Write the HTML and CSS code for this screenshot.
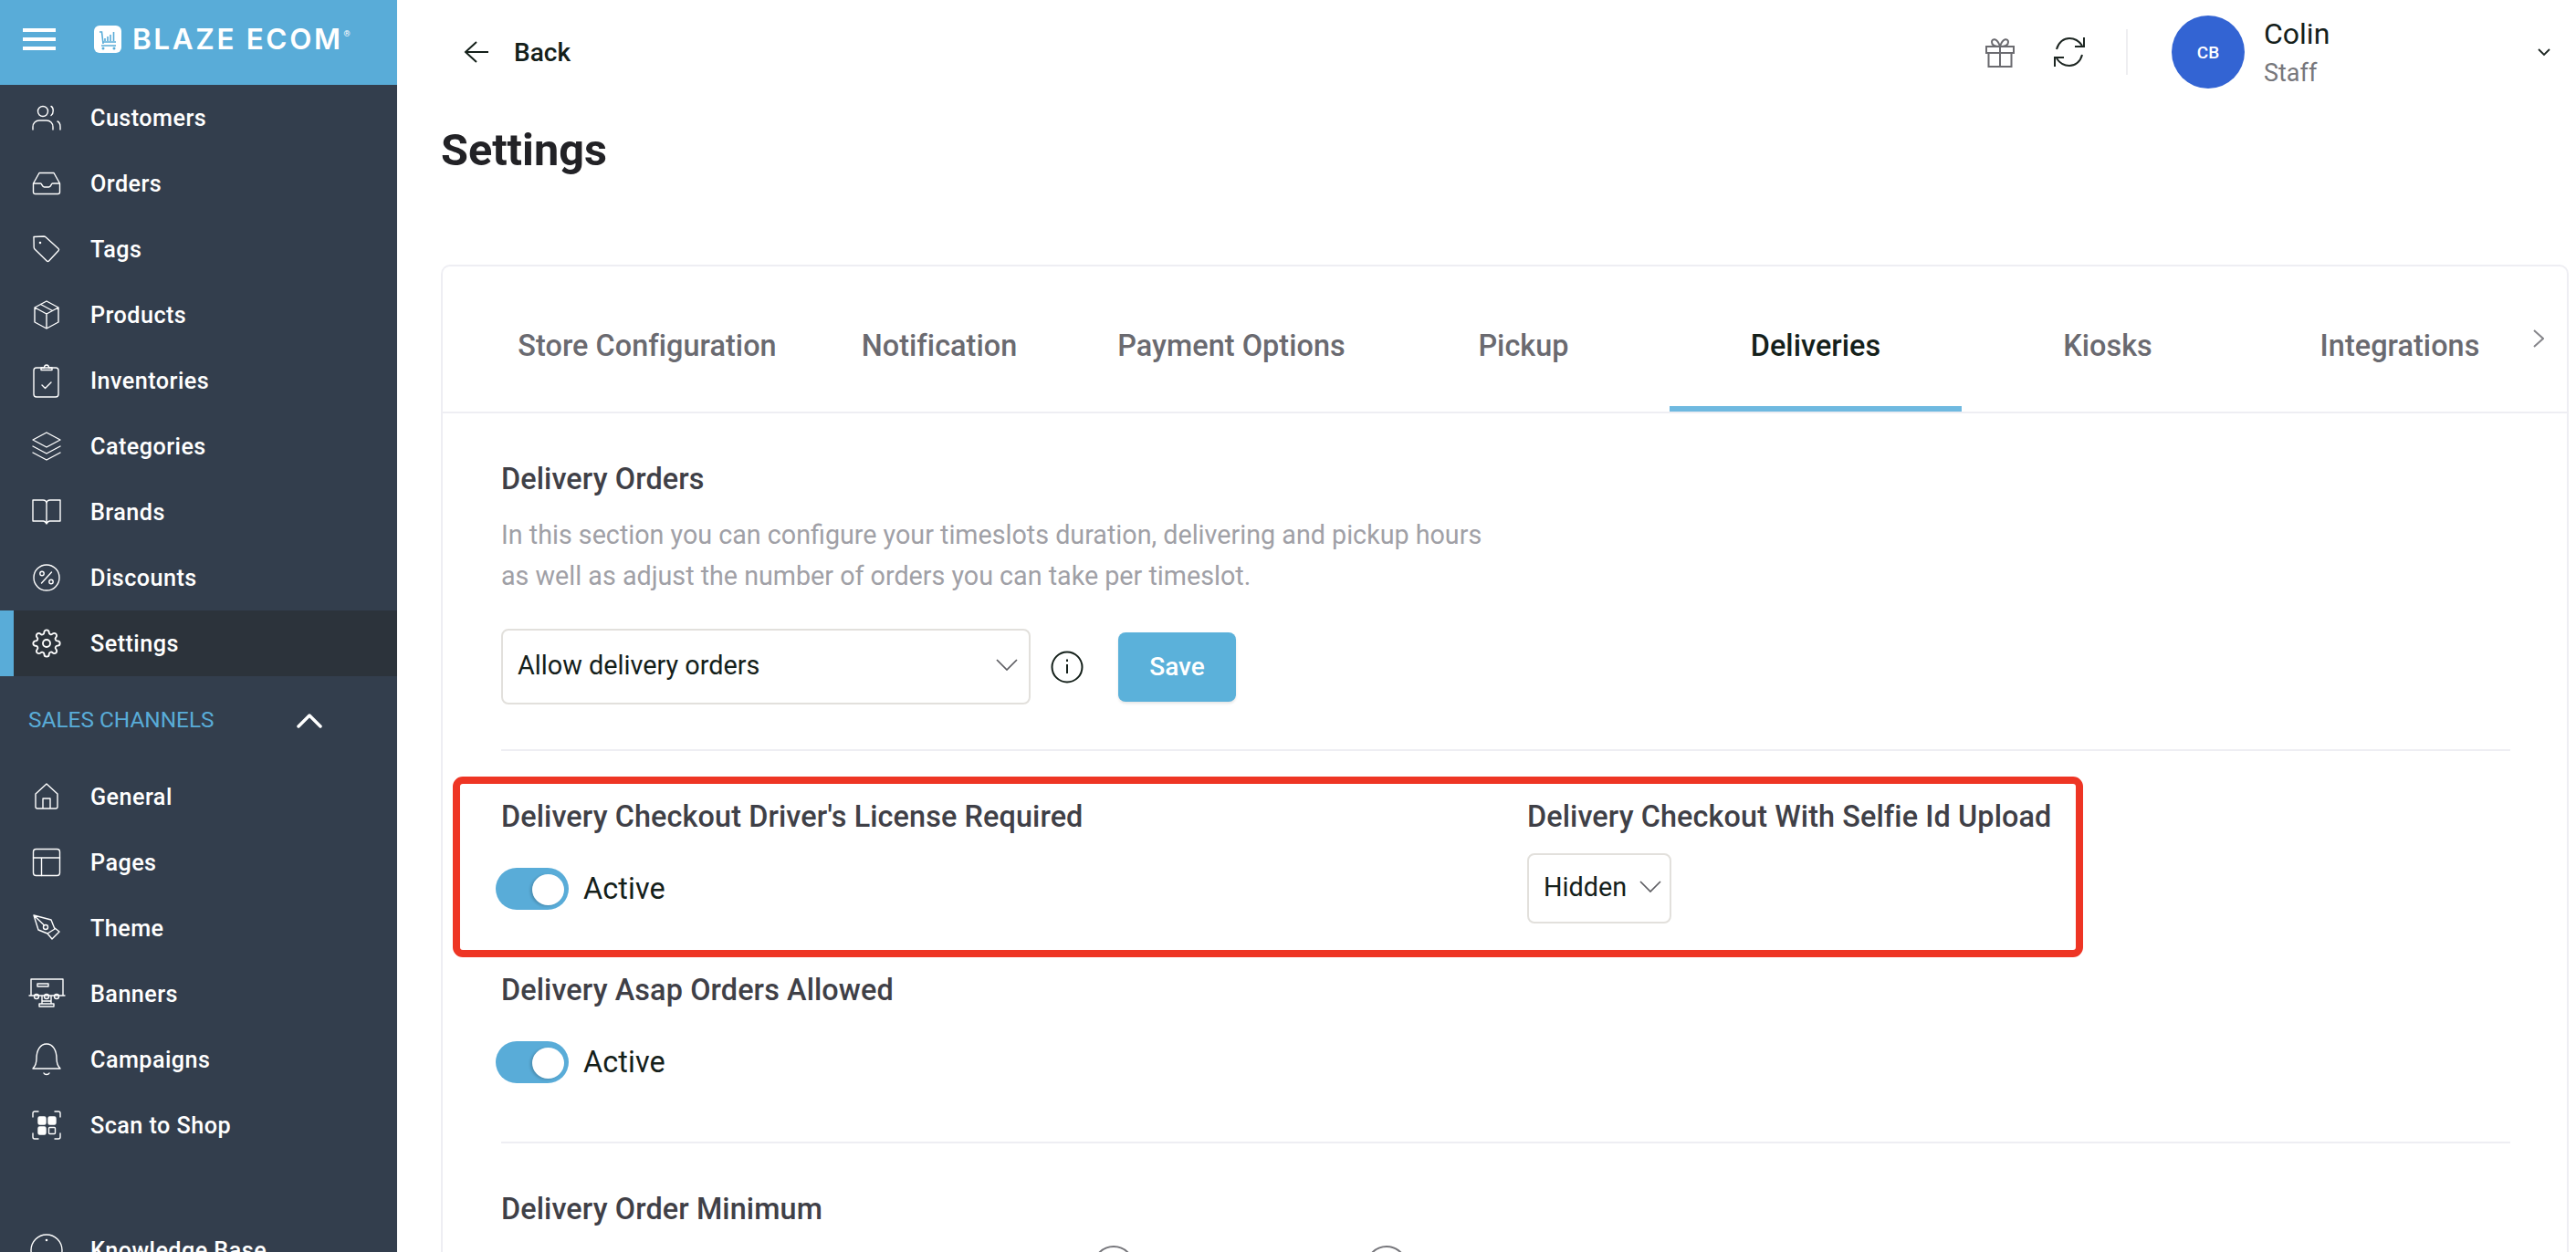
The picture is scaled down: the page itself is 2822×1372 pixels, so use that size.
FILE: index.html
```html
<!DOCTYPE html>
<html lang="en">
<head>
<meta charset="utf-8">
<title>Settings</title>
<link rel="stylesheet" href="styles.css">
</head>
<body>
<div class="app">
  <aside class="sidebar">
    <div class="brand">
      <div class="burger"><i></i><i></i><i></i></div>
      <svg class="logo-mark" viewBox="0 0 30 30"><rect width="30" height="30" rx="6" fill="#fff"/><path d="M6 7h2.500l1.500 13M12 17v-3M15 17v-5M18 17v-7M21.500 17V7M10 18h14M8 22h16" stroke="#59acd8" stroke-width="1.600" fill="none"/><circle cx="10" cy="25" r="1.500" fill="#59acd8"/><circle cx="22" cy="25" r="1.500" fill="#59acd8"/></svg>
      <span class="logo-text">BLAZE ECOM</span><span class="logo-r">®</span>
    </div>
    <nav class="nav">
      <a class="nav-item"><svg class="ico" viewBox="0 0 32 32"><circle cx="12" cy="9" r="5.500"/><path d="M21 3.500c3 1.500 3 8 0 10M1 29v-3c0-4 3-7 7-7h8c4 0 7 3 7 7v3M28 20c2 1 3 3 3 6v3"/></svg><span>Customers</span></a>
      <a class="nav-item"><svg class="ico" viewBox="0 0 32 32"><path d="M1.500 16L8 4.500h16L30.500 16v9.500a2 2 0 0 1-2 2h-25a2 2 0 0 1-2-2zM1.500 16h8c1.500 0 1.500 4 4 4h5c2.500 0 2.500-4 4-4h8"/></svg><span>Orders</span></a>
      <a class="nav-item"><svg class="ico" viewBox="0 0 32 32"><path d="M2 2.500L13 2c1 0 1.500.2 2 .7L29 15.500c.7.700.7 1.500 0 2.200L18.500 29c-.7.700-1.500.7-2.200 0L3 16c-.5-.5-.8-1-.8-2z"/><circle cx="9" cy="9" r=".6"/></svg><span>Tags</span></a>
      <a class="nav-item"><svg class="ico" viewBox="0 0 32 32"><path d="M16 1l13 7v16l-13 7-13-7V8zM3 8l13 7 13-7M16 15v16M9.500 4.500l13 7"/></svg><span>Products</span></a>
      <a class="nav-item"><svg class="ico ico-tall" viewBox="0 -2 32 36"><rect x="2" y="2" width="27" height="32" rx="3"/><path d="M10 4.500V2h3.500c0-4 5-4 5 0H22v2.500zM11 21l3.500 3.500L21 18"/></svg><span>Inventories</span></a>
      <a class="nav-item"><svg class="ico" viewBox="0 0 32 32"><path d="M16 1l15 8-15 8-15-8zM1 16l15 8 15-8M1 23l15 8 15-8"/></svg><span>Categories</span></a>
      <a class="nav-item"><svg class="ico" viewBox="0 0 32 32"><path d="M1 3h11c2.500 0 4 1.500 4 4 0-2.500 1.500-4 4-4h11v23H19.500c-1.500 0-2.500 1-3.500 3-1-2-2-3-3.500-3H1zM16 7v22"/></svg><span>Brands</span></a>
      <a class="nav-item"><svg class="ico" viewBox="0 0 32 32"><circle cx="16" cy="16" r="14"/><path d="M10.500 22l11-12"/><circle cx="11" cy="11.500" r="2.200"/><circle cx="21" cy="20.500" r="2.200"/></svg><span>Discounts</span></a>
      <a class="nav-item is-active"><svg class="ico" viewBox="0 0 24 24"><circle cx="12" cy="12" r="3"/><path d="M19.400 15a1.650 1.650 0 0 0 .33 1.820l.06.06a2 2 0 0 1 0 2.830 2 2 0 0 1-2.830 0l-.06-.06a1.650 1.650 0 0 0-1.820-.33 1.650 1.650 0 0 0-1 1.510V21a2 2 0 0 1-2 2 2 2 0 0 1-2-2v-.09A1.650 1.650 0 0 0 9 19.400a1.650 1.650 0 0 0-1.820.33l-.06.06a2 2 0 0 1-2.830 0 2 2 0 0 1 0-2.830l.06-.06a1.650 1.650 0 0 0 .33-1.820 1.650 1.650 0 0 0-1.510-1H3a2 2 0 0 1-2-2 2 2 0 0 1 2-2h.09A1.650 1.650 0 0 0 4.600 9a1.650 1.650 0 0 0-.33-1.820l-.06-.06a2 2 0 0 1 0-2.830 2 2 0 0 1 2.830 0l.06.06a1.650 1.650 0 0 0 1.820.33H9a1.650 1.650 0 0 0 1-1.510V3a2 2 0 0 1 2-2 2 2 0 0 1 2 2v.09a1.650 1.650 0 0 0 1 1.510 1.650 1.650 0 0 0 1.820-.33l.06-.06a2 2 0 0 1 2.830 0 2 2 0 0 1 0 2.830l-.06.06a1.650 1.650 0 0 0-.33 1.820V9a1.650 1.650 0 0 0 1.510 1H21a2 2 0 0 1 2 2 2 2 0 0 1-2 2h-.09a1.650 1.650 0 0 0-1.510 1z"/></svg><span>Settings</span></a>
      <div class="nav-head"><span>SALES CHANNELS</span><svg class="nav-chev" viewBox="0 0 28 16"><path d="M2 14L14 2l12 12"/></svg></div>
      <a class="nav-item"><svg class="ico" viewBox="0 0 32 32"><path d="M4 13L16 2l12 11v14a2 2 0 0 1-2 2H6a2 2 0 0 1-2-2zM12 29V18h8v11"/></svg><span>General</span></a>
      <a class="nav-item"><svg class="ico" viewBox="0 0 32 32"><rect x="1.500" y="1.500" width="29" height="29" rx="3"/><path d="M1.500 11h29M10.500 11v19.500"/></svg><span>Pages</span></a>
      <a class="nav-item"><svg class="ico" viewBox="0 0 32 32"><path d="M2 2l19 5 4 10-8 5-10-4zM2 2l11.500 11M17 22l5 6 8-8-5-4"/><circle cx="15" cy="15" r="2.500"/></svg><span>Theme</span></a>
      <a class="nav-item"><svg class="ico" viewBox="0 0 32 32"><path d="M-1 18V0h35v18M-3 18h39M11 19v8M21 19v8M11 24h10M8 27h16v3H8z"/><rect x="6" y="5" width="12" height="3" /><circle cx="5" cy="19" r="2.500"/><circle cx="16" cy="19" r="2.500"/><circle cx="27" cy="19" r="2.500"/></svg><span>Banners</span></a>
      <a class="nav-item"><svg class="ico" viewBox="0 0 32 32"><path d="M1 26c3-3 4-6 4-11C5 6 9-1 16-1s11 7 11 16c0 5 1 8 4 11zM13 31c1 2 5 2 6 0"/></svg><span>Campaigns</span></a>
      <a class="nav-item"><svg class="ico" viewBox="0 0 32 32"><path d="M1 7V3a2 2 0 0 1 2-2h4M25 1h4a2 2 0 0 1 2 2v4M1 25v4a2 2 0 0 0 2 2h4M31 25v4a2 2 0 0 1-2 2h-4"/><rect x="7" y="7" width="8" height="8" rx="1.500" class="fill"/><rect x="18" y="7" width="8" height="8" rx="1.500" class="fill"/><rect x="7" y="18" width="8" height="8" rx="1.500" class="fill"/><rect x="18.500" y="18.500" width="7" height="7" rx="1"/></svg><span>Scan to Shop</span></a>
      <a class="nav-item nav-kb"><svg class="ico" viewBox="0 0 32 32"><circle cx="16" cy="16" r="17"/><circle cx="16" cy="5" r=".6"/></svg><span>Knowledge Base</span></a>
    </nav>
  </aside>

  <main class="main">
    <header class="topbar">
      <div class="back">
        <svg class="back-arrow" viewBox="0 0 28 24"><path d="M27 12H2M14 1L2 12l12 11"/></svg>
        <span>Back</span>
      </div>
      <div class="top-tools">
        <svg class="tool gift" viewBox="0 0 32 34"><path d="M1 11h30v7H1zM3.500 18v15h25V18M16 11v22M16 11C10 11 7 9 7 6c0-4 6-5 9 5 3-10 9-9 9-5 0 3-3 5-9 5z"/></svg>
        <svg class="tool sync" viewBox="0 0 38 34"><path d="M5 14C7 6 13 2 19 2c5 0 10 2 14 8M35 1v10H25M33 20c-2 8-8 12-14 12-5 0-10-2-14-8M3 33V23h10"/></svg>
        <div class="top-sep"></div>
        <div class="avatar">CB</div>
        <div class="user">
          <div class="user-name">Colin</div>
          <div class="user-role">Staff</div>
        </div>
        <svg class="user-chev" viewBox="0 0 14 9"><path d="M1 1l6 6 6-6"/></svg>
      </div>
    </header>

    <h1 class="page-title">Settings</h1>

    <section class="card">
      <div class="tabs">
        <div class="tab">Store Configuration</div>
        <div class="tab">Notification</div>
        <div class="tab">Payment Options</div>
        <div class="tab">Pickup</div>
        <div class="tab is-active">Deliveries</div>
        <div class="tab">Kiosks</div>
        <div class="tab">Integrations</div>
        <svg class="tab-next" viewBox="0 0 12 20"><path d="M1 1l10 9L1 19"/></svg>
      </div>

      <div class="panel">
        <div class="block block-orders">
          <h2 class="label">Delivery Orders</h2>
          <p class="desc">In this section you can configure your timeslots duration, delivering and pickup hours<br>as well as adjust the number of orders you can take per timeslot.</p>
          <div class="order-row">
            <div class="select select-wide"><span>Allow delivery orders</span><svg class="chev" viewBox="0 0 24 13"><path d="M1 1l11 11L23 1"/></svg></div>
            <svg class="info" viewBox="0 0 36 36"><circle cx="18" cy="18" r="16.500"/><path d="M18 15v10M18 9.500v2.500"/></svg>
            <button class="save">Save</button>
          </div>
        </div>

        <div class="block-checkout">
          <div class="col-driver">
            <h2 class="label">Delivery Checkout Driver's License Required</h2>
            <div class="toggle-row"><div class="toggle"><i></i></div><span>Active</span></div>
          </div>
          <div class="col-selfie">
            <h2 class="label">Delivery Checkout With Selfie Id Upload</h2>
            <div class="select select-small"><span>Hidden</span><svg class="chev" viewBox="0 0 24 13"><path d="M1 1l11 11L23 1"/></svg></div>
          </div>
          <div class="highlight"></div>
        </div>

        <div class="block block-asap">
          <h2 class="label">Delivery Asap Orders Allowed</h2>
          <div class="toggle-row"><div class="toggle"><i></i></div><span>Active</span></div>
        </div>

        <div class="block block-min">
          <h2 class="label">Delivery Order Minimum</h2>
          <div class="radios"><div class="radio"></div><div class="radio radio-b"></div></div>
        </div>
      </div>
    </section>
  </main>
</div>
</body>
</html>
```
FILE: styles.css
```css
* { box-sizing: border-box; }
html, body { margin: 0; height: 100%; overflow: hidden; background: #fff; }
body { font-family: Roboto, "Liberation Sans", sans-serif; color: #111c16; }
h1, h2, p { margin: 0; }

.app { display: flex; height: 1372px; overflow: hidden; }

/* sidebar */
.sidebar { width: 435px; flex: none; background: #333e4d; overflow: hidden; }
.brand { height: 93px; background: #59acd8; display: flex; align-items: flex-start; padding: 28px 0 0 25px; color: #fff; }
.burger { width: 36px; height: 24px; margin-top: 3px; display: flex; flex-direction: column; justify-content: space-between; }
.burger i { display: block; height: 4px; background: #fff; }
.logo-mark { width: 30px; height: 30px; margin-left: 42px; flex: none; }
.logo-text { font-family: Inter, sans-serif; font-weight: 600; font-size: 31.500px; line-height: 30px; letter-spacing: 2.600px; margin-left: 12px; white-space: nowrap; }
.logo-r { font-size: 9px; line-height: 12px; margin-top: 3px; margin-left: 1px; }

.nav { display: flex; flex-direction: column; }
.nav-item { height: 72px; flex: none; display: flex; align-items: center; padding-left: 35px; gap: 32px; color: #fff; font-size: 25.200px; font-weight: 500; letter-spacing: .45px; }
.nav-item.is-active { background: #2c333b; box-shadow: inset 15px 0 0 #59acd8; }
.nav-head { height: 96px; flex: none; display: flex; align-items: center; padding: 0 0 2px 31px; color: #59acd8; font-size: 24.400px; }
.nav-chev { width: 28px; height: 16px; margin-left: 90px; margin-top: 4px; fill: none; stroke: #fff; stroke-width: 3.500; stroke-linecap: round; stroke-linejoin: round; }
.nav-kb { margin-top: 65px; }
.ico { width: 32px; height: 32px; flex: none; overflow: visible; fill: none; stroke: #fff; stroke-width: 1.400; stroke-linecap: round; stroke-linejoin: round; }
.ico-tall { height: 36px; }
.ico .fill { fill: #fff; }

/* main */
.main { flex: 1; min-width: 0; padding: 0 8px 0 48px; }
.topbar { height: 114px; display: flex; align-items: center; justify-content: space-between; }
.back { display: flex; align-items: center; gap: 27px; padding-left: 25px; font-size: 28px; font-weight: 500; color: #14201a; }
.back-arrow { width: 28px; height: 24px; fill: none; stroke: #14201a; stroke-width: 2; }
.top-tools { display: flex; align-items: center; }
.tool { fill: none; stroke-width: 2; }
.gift { width: 32px; height: 34px; stroke: #6b6b70; }
.sync { width: 38px; height: 34px; margin-left: 41px; stroke: #1d2622; }
.top-sep { width: 2px; height: 50px; background: #eeeef1; margin: 0 48px 0 43px; }
.avatar { width: 80px; height: 80px; border-radius: 50%; background: #3364d3; color: #fff; font-size: 19px; font-weight: 500; display: flex; align-items: center; justify-content: center; }
.user { width: 313px; margin-left: 21px; padding-top: 3px; }
.user-name { font-size: 32px; line-height: 40px; color: #14201a; }
.user-role { font-size: 27px; line-height: 40px; margin-top: 3px; color: #77777c; }
.user-chev { width: 14px; height: 9px; margin-right: 20px; margin-left: -13px; fill: none; stroke: #1d2622; stroke-width: 1.800; }

.page-title { font-size: 48.600px; font-weight: 700; color: #222226; line-height: 54px; margin: 24px 0 0; }

.card { margin-top: 98px; border: 2px solid #eeeef3; border-bottom: 0; border-radius: 10px 10px 0 0; }
.tabs { height: 161px; padding-left: 64px; display: flex; border-bottom: 2px solid #eeeef3; position: relative; }
.tab { width: 320px; flex: none; height: 159px; padding-top: 20px; display: flex; align-items: center; justify-content: center; font-size: 32.400px; font-weight: 500; letter-spacing: .05px; color: #6a6a70; border-bottom: 6px solid transparent; }
.tab.is-active { color: #14201a; border-bottom-color: #6fb9e0; }
.tab-next { position: absolute; right: 25px; top: 69px; width: 12px; height: 20px; fill: none; stroke: #85858a; stroke-width: 2; }

.panel { padding: 0 62px 0 64px; }
.label { font-size: 32.400px; font-weight: 500; color: #3f4047; line-height: 40px; letter-spacing: .1px; white-space: nowrap; }
.block-orders { padding-top: 52px; height: 370px; border-bottom: 2px solid #eeeef3; }
.desc { margin-top: 19px; font-size: 28.700px; line-height: 45px; color: #a0a0a6; white-space: nowrap; }
.order-row { display: flex; align-items: center; margin-top: 35px; }
.select { border: 2px solid #e2e0dc; border-radius: 8px; display: flex; align-items: center; font-size: 28.800px; color: #14201a; background: #fff; }
.select-wide { width: 580px; height: 83px; padding: 0 12px 4px 16px; justify-content: space-between; }
.chev { width: 24px; height: 13px; fill: none; stroke: #5d5d62; stroke-width: 1.700; }
.info { width: 36px; height: 36px; margin-left: 22px; fill: none; stroke: #14201a; stroke-width: 2; }
.save { width: 129px; height: 76px; margin-left: 38px; border: 0; border-radius: 8px; background: #5bb1da; color: #fff; font: 500 28px Roboto, sans-serif; box-shadow: 0 2px 3px rgba(0,0,0,.1); }

.block-checkout { display: flex; height: 223px; padding-top: 52px; position: relative; }
.col-driver { width: 1124px; flex: none; }
.toggle-row { display: flex; align-items: center; gap: 16px; margin: 36px 0 0 -6px; font-size: 32.400px; letter-spacing: .1px; color: #14201a; }
.toggle { width: 80px; height: 46px; border-radius: 23px; background: #59acd8; position: relative; flex: none; }
.toggle i { position: absolute; left: 40px; top: 7px; width: 35px; height: 34px; border-radius: 50%; background: #fff; box-shadow: -2px 1px 3px rgba(0,0,0,.18); }
.select-small { width: 158px; height: 77px; margin-top: 20px; padding: 0 9px 4px 16px; justify-content: space-between; }
.highlight { position: absolute; left: -53px; top: 28px; width: 1786px; height: 198px; border: 8px solid #ee3524; border-radius: 11px; pointer-events: none; }

.block-asap { padding-top: 19px; height: 207px; border-bottom: 2px solid #eeeef3; }
.block-min { padding-top: 52px; }
.radios { display: flex; margin-top: 20px; padding-left: 648px; }
.radio { width: 46px; height: 46px; border: 2px solid #77777c; border-radius: 50%; flex: none; }
.radio-b { margin-left: 253px; }
```
